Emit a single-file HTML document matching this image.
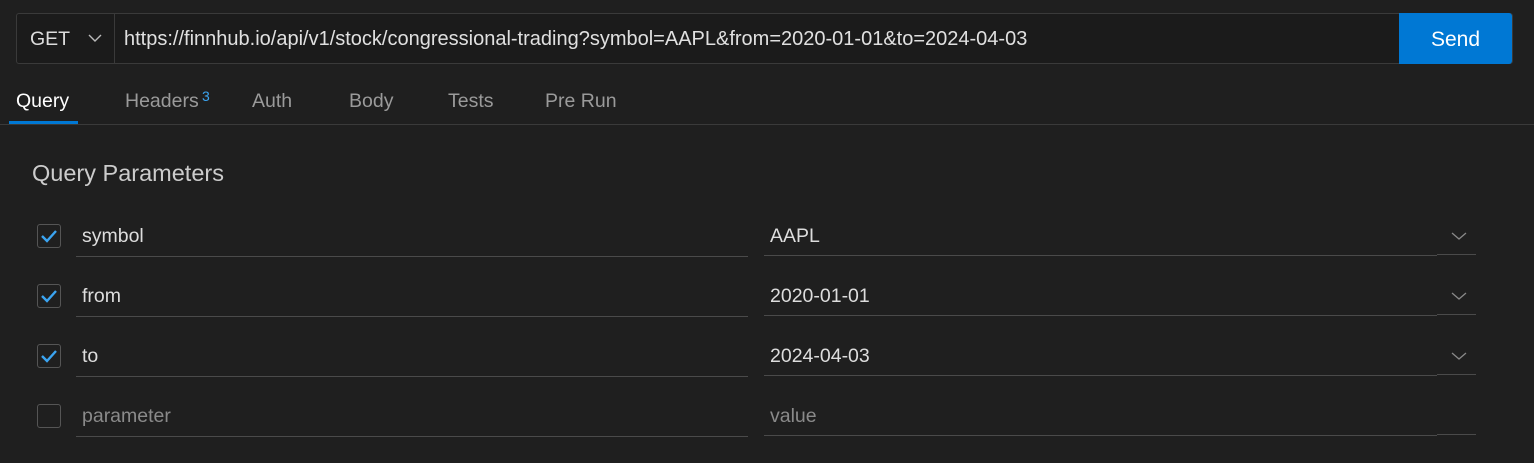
<!DOCTYPE html><html><head><style>
body{margin:0;width:1534px;height:463px;background:#1f1f1f;font-family:"Segoe UI","Liberation Sans",sans-serif;color:#ccc;position:relative;overflow:hidden}
.a{position:absolute;white-space:nowrap}
.bar{left:16px;top:13px;width:1495px;height:49px;border:1px solid #3a3a3a;border-radius:3px;background:#1b1b1b}
.send{left:1399px;top:13px;width:113px;height:51px;background:#0078d4;color:#fff;font-size:21px;line-height:53px;text-align:center;border-radius:0 3px 3px 0}
.tab{top:90px;font-size:19.5px;color:#9a9a9a}
.cb{width:22px;height:22px;border:1px solid #555;border-radius:3px;left:37px}
.ln{height:1px;background:#4a4a4a}
.t{font-size:19.5px;color:#ddd}
.p{font-size:19.5px;color:#8a8a8a}
</style></head><body>
<div class="a bar"></div>
<div class="a" style="left:114px;top:14px;width:1px;height:49px;background:#3a3a3a"></div>
<div class="a t" style="left:30px;top:28px">GET</div>
<svg class="a" style="left:88px;top:34px" width="14" height="9"><path d="M1 1l6 6 6-6" stroke="#bbb" fill="none" stroke-width="1.4"/></svg>
<div class="a t" style="left:124px;top:28px;color:#e0e0e0;font-size:20px">https://finnhub.io/api/v1/stock/congressional-trading?symbol=AAPL&amp;from=2020-01-01&amp;to=2024-04-03</div>
<div class="a send">Send</div>
<div class="a tab" style="left:16px;color:#fff">Query</div>
<div class="a tab" style="left:125px">Headers</div>
<div class="a" style="left:202px;top:88px;color:#3ba4f0;font-size:14px">3</div>
<div class="a tab" style="left:252px">Auth</div>
<div class="a tab" style="left:349px">Body</div>
<div class="a tab" style="left:448px">Tests</div>
<div class="a tab" style="left:545px">Pre Run</div>
<div class="a" style="left:0;top:124px;width:1534px;height:1px;background:#3a3a3a"></div>
<div class="a" style="left:9px;top:121px;width:69px;height:3px;background:#0078d4"></div>
<div class="a" style="left:32px;top:160px;font-size:23.5px;color:#ccc">Query Parameters</div>

<div id="rows"></div>
<script>
var r=[["symbol","AAPL",1],["from","2020-01-01",1],["to","2024-04-03",1],["parameter","value",0]],h="";
r.forEach(function(x,i){var y=224+i*60;
h+='<div class="a cb" style="top:'+y+'px"></div>';
if(x[2])h+='<svg class="a" style="left:39px;top:'+(y+4)+'px" width="20" height="16"><path d="M3 8l5 5 9-10" stroke="#3ba4f0" stroke-width="2.4" fill="none"/></svg>';
var c=x[2]?"t":"p";
h+='<div class="a '+c+'" style="left:82px;top:'+(y+1)+'px">'+x[0]+'</div>';
h+='<div class="a '+c+'" style="left:770px;top:'+(y+1)+'px">'+x[1]+'</div>';
h+='<div class="a ln" style="left:76px;top:'+(y+32)+'px;width:672px"></div>';
h+='<div class="a ln" style="left:764px;top:'+(y+31)+'px;width:673px"></div>';
h+='<div class="a ln" style="left:1437px;top:'+(y+30)+'px;width:39px"></div>';
if(x[2])h+='<svg class="a" style="left:1451px;top:'+(y+8)+'px" width="16" height="9"><path d="M1 1l7 6 7-6" stroke="#888" fill="none" stroke-width="1.3"/></svg>';
});
document.getElementById("rows").innerHTML=h;
</script>
</body></html>
